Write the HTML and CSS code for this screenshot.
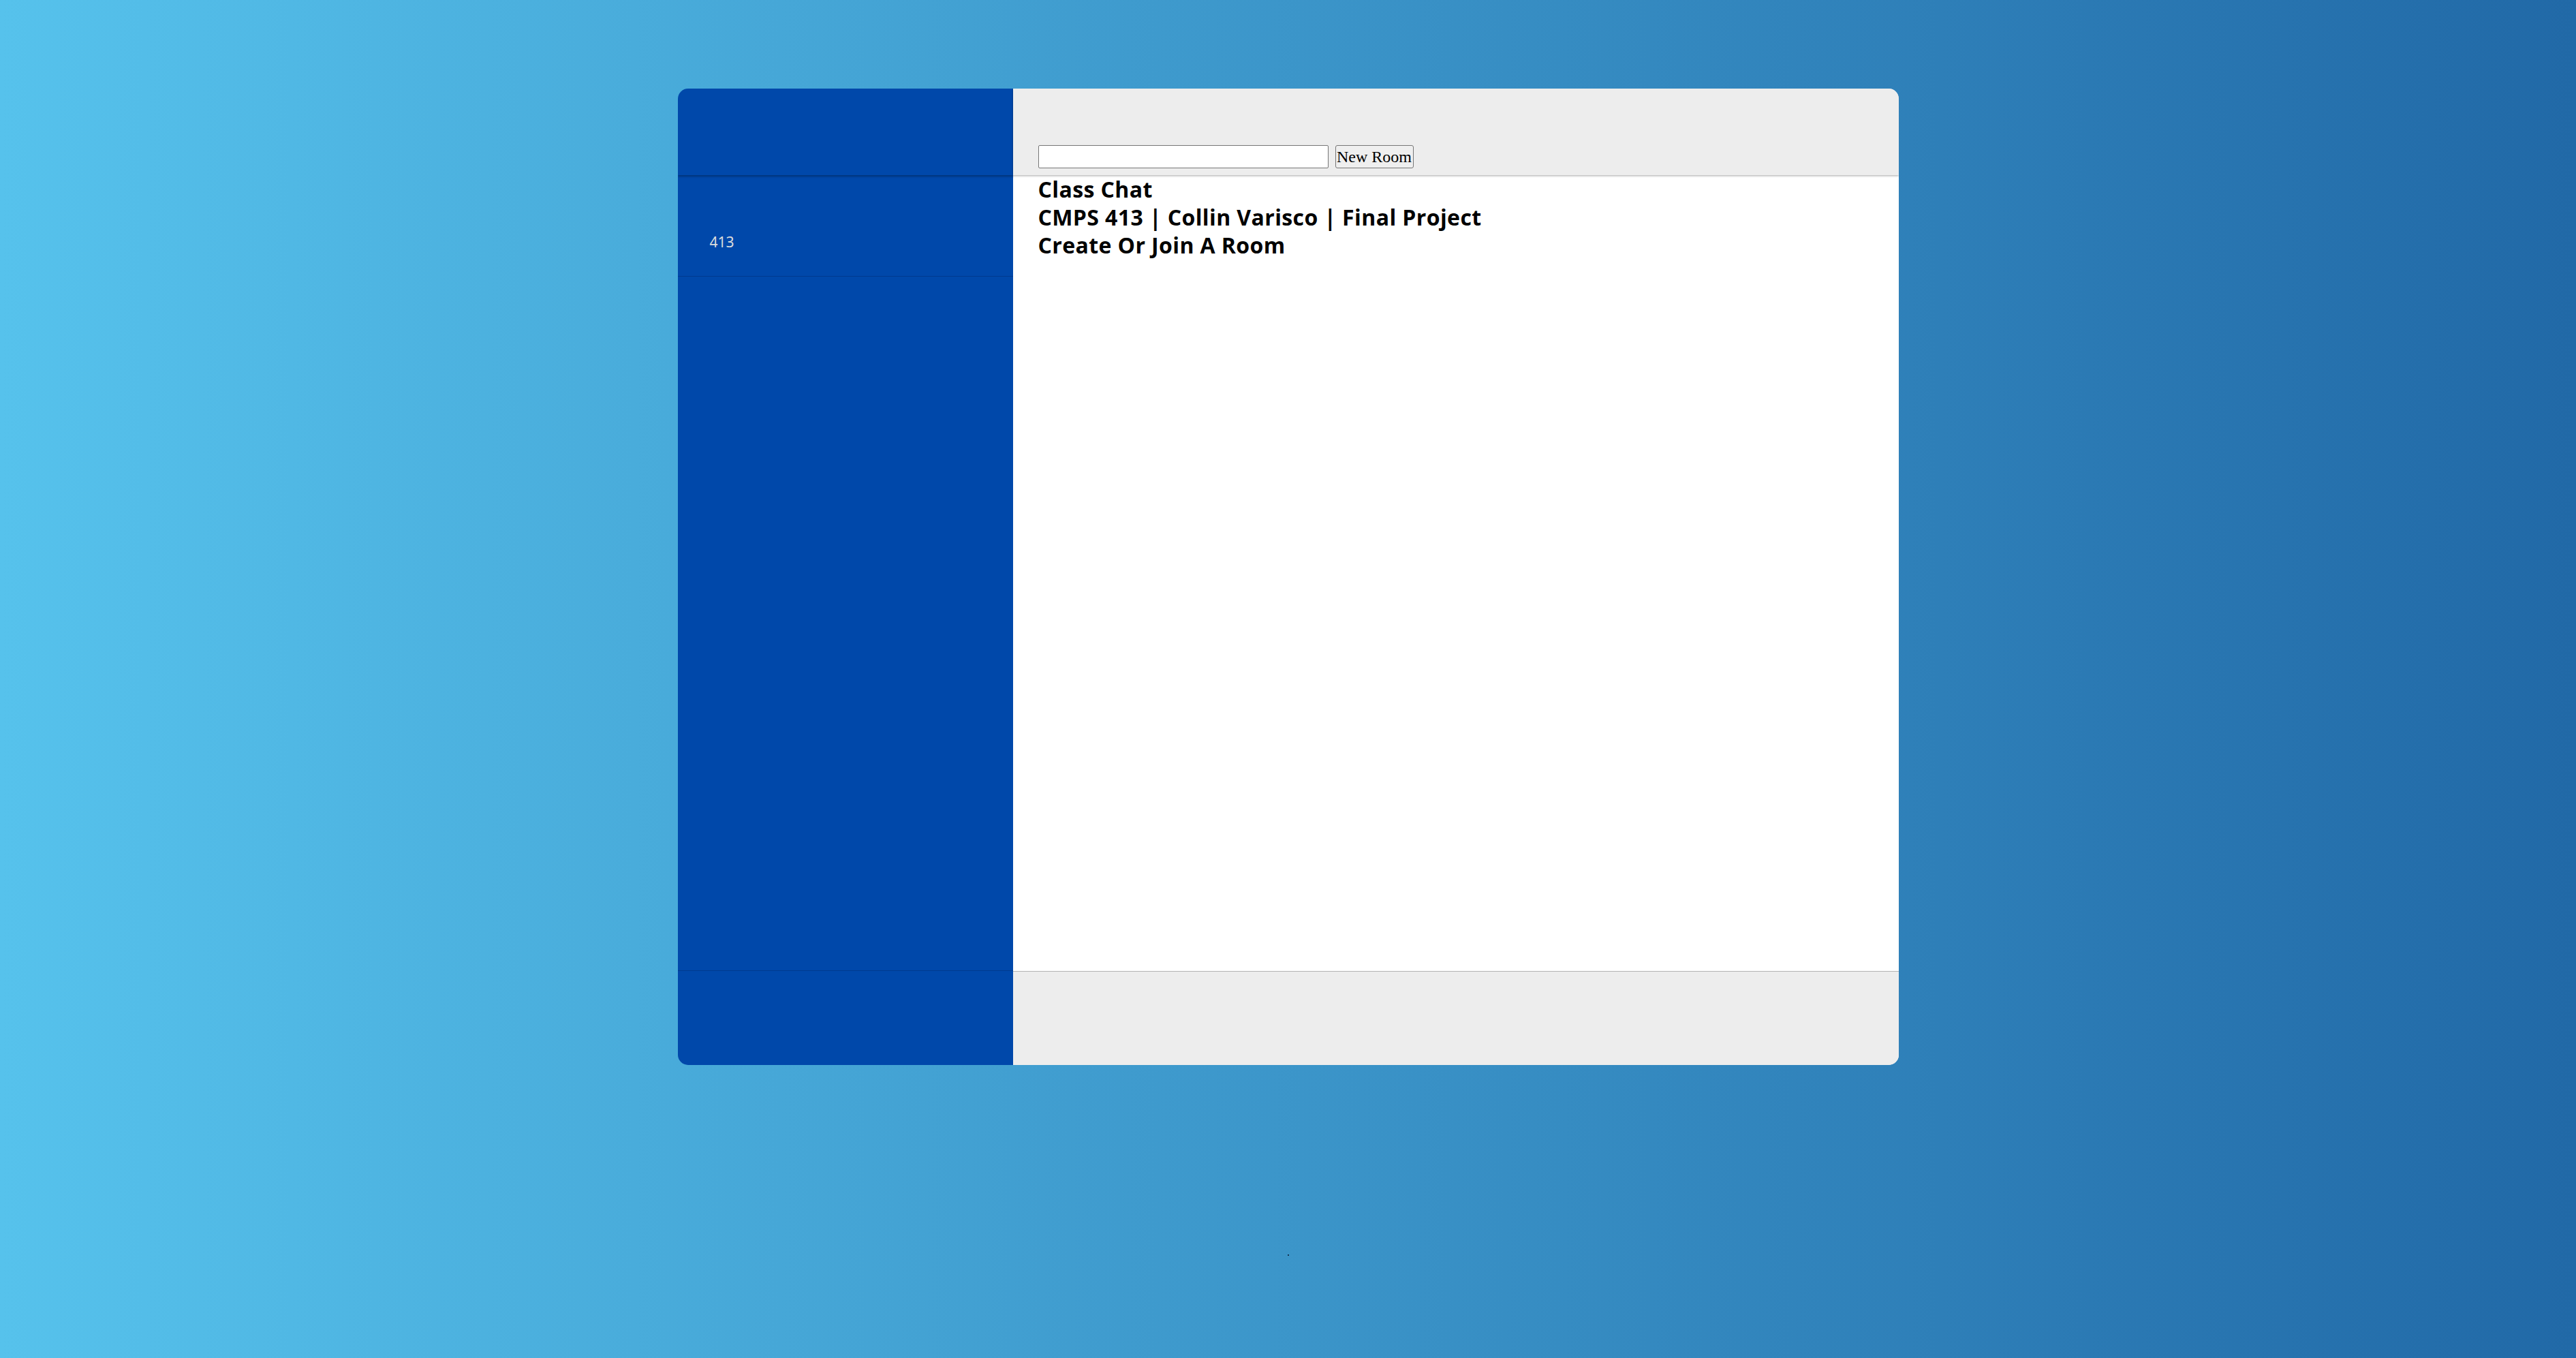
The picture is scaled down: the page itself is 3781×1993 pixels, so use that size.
FILE: index.html
```html
<!DOCTYPE html>
<html lang="en">
<head>
<meta charset="utf-8">
<title>Class Chat</title>
<link rel="stylesheet" href="styles.css">
</head>
<body>
<div class="app">
  <aside class="sidebar">
    <div class="side-head"></div>
    <div class="room-item">413</div>
    <div class="side-fill"></div>
    <div class="side-foot"></div>
  </aside>
  <main class="main">
    <header class="main-head">
      <input class="room-input" type="text">
      <button class="room-btn">New Room</button>
    </header>
    <section class="content">
      <div class="title">Class Chat</div>
      <div class="title">CMPS 413 | Collin Varisco | Final Project</div>
      <div class="title">Create Or Join A Room</div>
    </section>
    <footer class="main-foot"></footer>
  </main>
</div>
<div class="dot"></div>
</body>
</html>
```
FILE: styles.css
```css
html, body {
  margin: 0;
  padding: 0;
}
body {
  min-height: 1993px;
  background: linear-gradient(to right, #56c2ec, #2169a7);
  font-family: "Noto Sans", sans-serif;
  overflow: hidden;
}
.app {
  width: 1792px;
  height: 1433px;
  margin: 130px auto 0;
  display: flex;
  border-radius: 15px;
  overflow: hidden;
}
.sidebar {
  width: 492px;
  flex: none;
  background: #0048aa;
  display: flex;
  flex-direction: column;
}
.side-head {
  height: 127px;
  flex: none;
  box-shadow: 0 2px 3px rgba(0, 0, 0, 0.3);
  position: relative;
  z-index: 1;
}
.room-item {
  height: 149px;
  box-sizing: border-box;
  padding: 88px 0 0 47px;
  border-bottom: 1px solid #003a8e;
  color: #dcdcdc;
  font-family: "Noto Sans", sans-serif;
  font-size: 21px;
  line-height: 21px;
  flex: none;
}
.side-fill {
  flex: 1;
}
.side-foot {
  height: 138px;
  flex: none;
  border-top: 1px solid #003a8e;
}
.main {
  flex: 1;
  display: flex;
  flex-direction: column;
  background: #ffffff;
}
.main-head {
  height: 127px;
  flex: none;
  box-sizing: border-box;
  background: #ededed;
  display: flex;
  align-items: flex-end;
  gap: 10px;
  padding: 0 0 10px 37px;
  box-shadow: 0 1px 3px rgba(0, 0, 0, 0.35);
  position: relative;
  z-index: 1;
}
.room-input {
  width: 426px;
  height: 34px;
  box-sizing: border-box;
  margin: 0;
  border: 1px solid #767676;
  border-radius: 2px;
  background: #fff;
  padding: 0 4px;
}
.room-btn {
  width: 115px;
  height: 34px;
  box-sizing: border-box;
  margin: 0;
  padding: 0;
  border: 1px solid #767676;
  border-radius: 3px;
  background: #efefef;
  font-family: "Liberation Serif", serif;
  font-size: 24px;
  color: #000;
}
.content {
  flex: 1;
  padding: 0 0 0 37px;
}
.title {
  font-family: "Open Sans", sans-serif;
  font-weight: 700;
  font-size: 32px;
  letter-spacing: 0.4px;
  line-height: 41px;
  color: #000;
}
.main-foot {
  height: 138px;
  flex: none;
  box-sizing: border-box;
  background: #ededed;
  border-top: 1px solid #b3b3b3;
}
.dot {
  width: 2px;
  height: 2px;
  background: #13324f;
  margin: 278px auto 0;
}
```
